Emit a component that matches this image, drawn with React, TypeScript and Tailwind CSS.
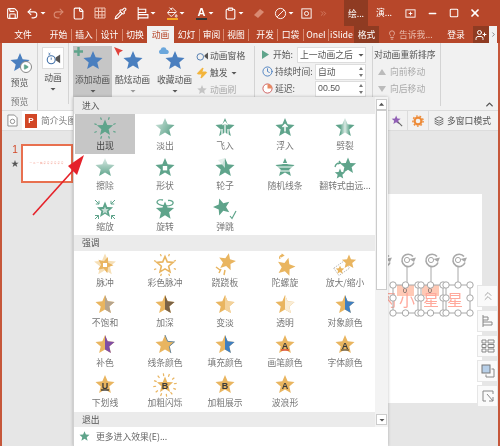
import React from "react";
import { Save, Undo2, Redo2, File, Pipette, PaintBucket, Clipboard, ChevronsRight, Minus, Square, X, Lightbulb, UserPlus, ChevronRight, ChevronUp, Zap, Clock, Play, ChevronsUp, Layers } from "lucide-react";

const G = "#5fa48b", Y = "#e9b560", B = "#4a7fbf";
const pts = (cx: number, cy: number, R: number, r = R * 0.45, rot = 0) =>
  Array.from({ length: 10 }, (_, i) => {
    const a = ((-90 + rot + i * 36) * Math.PI) / 180, q = i % 2 ? r : R;
    return [cx + q * Math.cos(a), cy + q * Math.sin(a)];
  });
const P = (a: number[][]) => a.map((p) => p.map((n) => n.toFixed(2)).join(",")).join(" ");
const S = (cx = 12, cy = 12, R = 10, rot = 0) => P(pts(cx, cy, R, R * 0.45, rot));
const H = (cx = 12, cy = 12, R = 10) => P(pts(cx, cy, R).slice(0, 6));

function Ticks({ c, r1 = 10, r2 = 12, n = 8 }: { c: string; r1?: number; r2?: number; n?: number }) {
  return (
    <>
      {Array.from({ length: n }, (_, i) => {
        const a = ((i * 360) / n + 22) * (Math.PI / 180);
        return <line key={i} x1={12 + r1 * Math.cos(a)} y1={12 + r1 * Math.sin(a)} x2={12 + r2 * Math.cos(a)} y2={12 + r2 * Math.sin(a)} stroke={c} strokeWidth="1.2" />;
      })}
    </>
  );
}
function Half({ c }: { c: string }) {
  return (
    <>
      <polygon points={S()} fill={Y} />
      <polygon points={H()} fill={c} />
    </>
  );
}
function Letter({ t, under }: { t: string; under?: string }) {
  return (
    <>
      <polygon points={S()} fill={Y} />
      <text x="12" y="15.5" textAnchor="middle" fontSize="9" fontWeight="700" fill="#3a3a3a" fontFamily="Liberation Sans, sans-serif">{t}</text>
      {under && <line x1="8" y1="17" x2="16" y2="17" stroke={under} strokeWidth="1.4" />}
    </>
  );
}
const icons: Record<string, React.ReactNode> = {
  appear: (<><polygon points={S(12, 12, 8.5)} fill={G} /><Ticks c={G} r1={9} r2={11.5} /></>),
  fade: (<><defs><linearGradient id="gf" x1="0" y1="0" x2="1" y2="0.6"><stop offset="0" stopColor="#d7e9e2" /><stop offset="1" stopColor={G} /></linearGradient></defs><polygon points={S()} fill="url(#gf)" /></>),
  fly: (<><polygon points={S()} fill={G} /><path d="M12 6v12M9.5 9L12 6l2.5 3M9 13v6M15 13v6" stroke="#fff" strokeWidth="1.2" fill="none" /></>),
  float: (<><polygon points={S()} fill={G} /><path d="M12 8.5v7M9.5 11L12 8.5l2.5 2.5" stroke="#fff" strokeWidth="1.5" fill="none" /></>),
  split: (<><defs><linearGradient id="gs" x1="0" y1="0" x2="1" y2="0"><stop offset="0.25" stopColor={G} /><stop offset="0.5" stopColor="#d8e9e3" /><stop offset="0.75" stopColor={G} /></linearGradient></defs><polygon points={S()} fill="url(#gs)" /></>),
  wipe: (<><defs><linearGradient id="gw" x1="0" y1="0" x2="0" y2="1"><stop offset="0" stopColor="#dcebe6" /><stop offset="1" stopColor={G} /></linearGradient></defs><polygon points={S()} fill="url(#gw)" /></>),
  shape: (<><polygon points={S()} fill={G} /><rect x="9.8" y="10" width="4.4" height="4.4" fill="#fff" /></>),
  wheel: (<><polygon points={S()} fill={G} /><path d="M12 2v10L5 4z" fill="#dcebe6" opacity="0.8" /></>),
  lines: (<><polygon points={S()} fill={G} /><path d="M1 7.5h22M1 11h22M1 15h22" stroke="#fff" strokeWidth="1.2" /></>),
  flip: (<><polygon points={S(15, 10, 8.5)} fill={G} /><polygon points={S(7, 18, 5.5)} fill={G} /><path d="M2 11a5 5 0 0 1 5-4M6 5l1.6 2L5 8" stroke={G} strokeWidth="1.3" fill="none" /></>),
  zoom: (<><polygon points={S(12, 13, 8.5)} fill={G} /><polygon points={S(12, 13.5, 4)} fill="#c8dfd7" /><path d="M2 3l4 4M6 3.8V7H2.8M22 3l-4 4M18 3.8V7h3.2M2 22l3.5-3.5M5.5 22v-3.5H2M22 22l-3.5-3.5M18.5 22v-3.5H22" stroke={G} strokeWidth="1" fill="none" /></>),
  spin: (<><polygon points={S(12, 14, 9.5)} fill={G} /><path d="M15 3.5C18 3 21 4.5 20 6.5c-1 2-5 2.5-8 2.3C8 8.5 3 7 4.2 4.5 5 3 8 2.5 10 3" stroke={G} strokeWidth="1.3" fill="none" /></>),
  bounce: (<><polygon points={S(9, 10, 9, -18)} fill={G} /><path d="M17 19l2 2.5L23 14" stroke={G} strokeWidth="1.2" fill="none" /></>),
  pulse: (<><polygon points={S(12, 12, 11.5)} fill="#f6dfb6" /><polygon points={S(12, 12, 8.5, 20)} fill={Y} /><rect x="10" y="10" width="4" height="4" fill="#fff" /></>),
  color: (<><polygon points={S(12, 12, 8.5)} fill="#fff" stroke={Y} strokeWidth="1.6" /><Ticks c={Y} r1={9.5} r2={11.8} /></>),
  teeter: (<><polygon points={S(14, 9, 9, 12)} fill={Y} /><path d="M6 20l2-4M11 22l1-5M3 14l4 3" stroke={Y} strokeWidth="1.5" /></>),
  whirl: (<><polygon points={S(13, 14, 9.5, 15)} fill={Y} /><path d="M7 6c-1-2 0-4 3-3.5M8.5 1L10.5 2.5 8 4" stroke={Y} strokeWidth="1.3" fill="none" /></>),
  grow: (<><rect x="2" y="11" width="13" height="9" fill="#fff" stroke="#999" strokeWidth="0.6" strokeDasharray="1.5 1" transform="rotate(-35 8 15)" /><polygon points={S(16, 9, 7.5)} fill={Y} /><polygon points={S(7, 17, 4.5)} fill={Y} /></>),
  desat: <Half c="#b5a48e" />,
  darken: <Half c="#7a6347" />,
  lighten: <Half c="#f3d29b" />,
  trans: <Half c="#f9ecd5" />,
  objc: <Half c="#3f7fc1" />,
  comp: <Half c="#7f4ea5" />,
  line: (<><polygon points={S()} fill={Y} /><polyline points={P(pts(12, 12, 10).slice(0, 5))} fill="none" stroke="#5b7f9a" strokeWidth="0.9" /></>),
  fill: <Half c="#3f7fc1" />,
  brush: <Letter t="A" under="#d9452b" />,
  font: <Letter t="A" under="#6b5a3c" />,
  under: <Letter t="U" under="#3a3a3a" />,
  flash: (<><polygon points={S(12, 12, 8.5)} fill={Y} /><Ticks c={Y} r1={9} r2={11.8} n={12} /><text x="12" y="15.5" textAnchor="middle" fontSize="9" fontWeight="700" fill="#3a3a3a" fontFamily="Liberation Sans, sans-serif">B</text></>),
  bold: <Letter t="B" />,
  wave: <Letter t="A" />,
};

function Cell({ label, icon, sel }: { label: string; icon: string; sel?: boolean }) {
  return (
    <div className={`h-[40.33px] w-[60px] flex flex-col items-center pt-[2px] ${sel ? "bg-[#c6c6c6]" : ""}`}>
      <svg viewBox="0 0 24 24" className="w-[24px] h-[24px] shrink-0">{icons[icon]}</svg>
      <span className={`text-[8.8px] leading-[12px] whitespace-nowrap ${sel ? "text-[#444]" : "text-[#777]"}`}>{label}</span>
    </div>
  );
}
function Head({ t }: { t: string }) {
  return <div className="bg-[#ebebeb] text-[#555] text-[8.8px] pl-[8px] h-[16px] leading-[16px]">{t}</div>;
}
const enter: [string, string][] = [["出现", "appear"], ["淡出", "fade"], ["飞入", "fly"], ["浮入", "float"], ["劈裂", "split"], ["擦除", "wipe"], ["形状", "shape"], ["轮子", "wheel"], ["随机线条", "lines"], ["翻转式由远...", "flip"], ["缩放", "zoom"], ["旋转", "spin"], ["弹跳", "bounce"]];
const emph: [string, string][] = [["脉冲", "pulse"], ["彩色脉冲", "color"], ["跷跷板", "teeter"], ["陀螺旋", "whirl"], ["放大/缩小", "grow"], ["不饱和", "desat"], ["加深", "darken"], ["变淡", "lighten"], ["透明", "trans"], ["对象颜色", "objc"], ["补色", "comp"], ["线条颜色", "line"], ["填充颜色", "fill"], ["画笔颜色", "brush"], ["字体颜色", "font"], ["下划线", "under"], ["加粗闪烁", "flash"], ["加粗展示", "bold"], ["波浪形", "wave"]];

function Chev({ c = "#fff" }: { c?: string }) {
  return <svg viewBox="0 0 8 8" className="w-[8px] h-[8px]"><path d="M1.5 3h5L4 5.5z" fill={c} /></svg>;
}
function Spin() {
  return <svg viewBox="0 0 8 14" className="w-[8px] h-[14px]"><path d="M2 5h4L4 2zM2 9h4l-2 3z" fill="#777" /></svg>;
}
function BlueStar() {
  return <svg viewBox="0 0 24 24" className="w-[24px] h-[24px]"><polygon points={S(12, 12, 10)} fill={B} /></svg>;
}
function Btn({ w, label, active, children, dim }: { w: string; label: string; active?: boolean; children: React.ReactNode; dim?: boolean }) {
  return (
    <div className={`${w} h-[51px] mt-[3px] flex flex-col items-center ${active ? "bg-[#c6c6c6]" : ""}`}>
      <div className="h-[27px] flex items-end relative">{children}</div>
      <span className="text-[8.8px] leading-[14px] text-[#555] whitespace-nowrap">{label}</span>
      <Chev c={dim ? "#999" : "#555"} />
    </div>
  );
}
function Tab({ w, t, active, dark }: { w: string; t: string; active?: boolean; dark?: boolean }) {
  return (
    <div className={`${w} h-[17px] text-center text-[8.8px] leading-[17px] shrink-0 overflow-hidden whitespace-nowrap ${active ? "bg-[#f1f1f1] text-[#b7472a]" : dark ? "bg-[#8f3b22] text-white" : "text-white"}`}>{t}</div>
  );
}
const Sep = () => <div className="w-px h-[12px] bg-[#d98a72] self-center shrink-0" />;
function Tool({ children }: { children: React.ReactNode }) {
  return <div className="w-[21px] h-[22px] bg-[#fafafa] border border-[#e6e6e6] flex items-center justify-center text-[#9a9a9a]">{children}</div>;
}
const rot = [-5, 19, 43, 70];
const handles: [number, number][] = [5, 17.5, 30, 33, 42.5, 55, 58, 70, 82].flatMap((x) => [32, 60].map((y) => [x, y] as [number, number])).concat([5, 30, 33, 55, 58, 82].map((x) => [x, 45] as [number, number]));

export default function App() {
  const wi = "w-[13px] h-[13px] text-white";
  return (
    <div className="relative w-[500px] h-[446px] overflow-hidden bg-[#e6e6e6] font-['Noto_Sans_CJK_SC','Liberation_Sans',sans-serif] blur-[0.3px]">
      {/* title bar */}
      <div className="h-[26px] flex items-center bg-[#b7472a] pl-[2px]">
        <div className="w-[21px] flex justify-center"><Save className={wi} /></div>
        <div className="w-[26px] flex items-center justify-center"><Undo2 className={wi} /><Chev /></div>
        <div className="w-[19px] flex justify-center"><Redo2 className="w-[13px] h-[13px] text-[#d98a72]" /></div>
        <div className="w-[21px] flex justify-center"><File className={wi} /></div>
        <div className="w-[21px] flex justify-center">
          <svg viewBox="0 0 12 12" className="w-[12px] h-[12px]"><path d="M1 1h10v10H1zM1 4.5h10M1 8h10M4.5 1v10M8 1v10" stroke="#f0c4b4" fill="none" /></svg>
        </div>
        <div className="w-[21px] flex justify-center"><Pipette className={wi} /></div>
        <div className="w-[30px] flex items-center justify-center">
          <svg viewBox="0 0 12 12" className="w-[13px] h-[13px]"><path d="M2 0v12M2 2h7v3H2M2 7h9v3H2" stroke="#fff" fill="none" /></svg><Chev />
        </div>
        <div className="w-[30px] flex items-center justify-center">
          <div className="flex flex-col items-center"><PaintBucket className="w-[11px] h-[11px] text-white" /><div className="w-[11px] h-[2px] bg-[#f5a623]" /></div><Chev />
        </div>
        <div className="w-[29px] flex items-center justify-center">
          <div className="flex flex-col items-center leading-none"><span className="text-[11px] leading-[11px] font-bold text-white font-['Liberation_Sans']">A</span><div className="w-[11px] h-[2px] bg-[#333]" /></div><Chev />
        </div>
        <div className="w-[29px] flex items-center justify-center"><Clipboard className={wi} /><Chev /></div>
        <div className="w-[20px] flex justify-center">
          <svg viewBox="0 0 12 12" className="w-[12px] h-[12px]"><path d="M1 8l6-6 4 3-6 6z" fill="#d98a72" /></svg>
        </div>
        <div className="w-[30px] flex items-center justify-center">
          <svg viewBox="0 0 14 14" className="w-[13px] h-[13px]"><circle cx="7" cy="7" r="5.5" stroke="#fff" fill="none" /><path d="M3.5 10.5l7-7" stroke="#fff" /></svg><Chev />
        </div>
        <div className="w-[14px] flex justify-center">
          <svg viewBox="0 0 14 14" className="w-[13px] h-[13px]"><rect x="2" y="2" width="10" height="10" stroke="#fff" fill="none" /><circle cx="7" cy="7" r="2.2" stroke="#fff" fill="none" /></svg>
        </div>
        <div className="w-[20px] flex justify-center"><ChevronsRight className="w-[9px] h-[9px] text-[#d98a72]" /></div>
        <div className="w-[11px]" />
        <div className="w-[24px] h-[26px] bg-[#8f3b22] text-center text-white text-[8.8px] leading-[28px]">绘...</div>
        <div className="w-[32px] text-center text-white text-[8.8px]">演...</div>
        <div className="w-[21px] flex justify-center">
          <svg viewBox="0 0 12 12" className="w-[11px] h-[11px]"><rect x="1" y="2" width="10" height="8" stroke="#fff" fill="none" /><path d="M4 6h4M6 4v4" stroke="#fff" /></svg>
        </div>
        <div className="w-[22px] flex justify-center"><Minus className="w-[11px] h-[11px] text-white" strokeWidth={3} /></div>
        <div className="w-[22px] flex justify-center"><Square className="w-[10px] h-[10px] text-white" strokeWidth={2.5} /></div>
        <div className="w-[20px] flex justify-center"><X className="w-[12px] h-[12px] text-white" strokeWidth={3.5} /></div>
      </div>
      {/* tabs */}
      <div className="h-[17px] flex bg-[#b7472a]">
        <Tab w="w-[46px]" t="文件" />
        <Tab w="w-[25px]" t="开始" /><Sep />
        <Tab w="w-[24px]" t="插入" /><Sep />
        <Tab w="w-[25px]" t="设计" /><Sep />
        <Tab w="w-[24px]" t="切换" />
        <Tab w="w-[27px]" t="动画" active />
        <Tab w="w-[25px]" t="幻灯" /><Sep />
        <Tab w="w-[23px]" t="审阅" /><Sep />
        <Tab w="w-[24px]" t="视图" /><Sep />
        <div className="w-[4px]" />
        <Tab w="w-[24px]" t="开发" /><Sep />
        <Tab w="w-[25px]" t="口袋" /><Sep />
        <Tab w="w-[24px]" t="OneI" /><Sep />
        <Tab w="w-[25px]" t="iSlide" />
        <Tab w="w-[25px]" t="格式" dark />
        <div className="w-[8px]" />
        <div className="w-[52px] flex items-center gap-[2px] text-[8.8px] text-[#e8b8a8] whitespace-nowrap"><Lightbulb className="w-[10px] h-[10px]" />告诉我...</div>
        <Tab w="w-[34px]" t="登录" />
        <div className="w-[16px] h-[17px] bg-[#8f3b22] flex items-center justify-center"><UserPlus className="w-[12px] h-[12px] text-white" /></div>
        <div className="w-[8px] h-[17px] bg-[#f1f1f1] flex items-center justify-center"><ChevronRight className="w-[7px] h-[7px] text-[#444]" /></div>
      </div>
      {/* body with coloured window edge */}
      <div className="h-[403px] border-x-2 border-[#c6573a] flex flex-col">
        {/* ribbon */}
        <div className="h-[67px] flex bg-[#f1f1f1] relative shrink-0">
          <div className="w-[36px] border-r border-[#d4d4d4] flex flex-col items-center">
            <div className="relative mt-[8px] h-[24px]">
              <BlueStar />
              <div className="absolute left-[12px] top-[10px] w-[12px] h-[12px] rounded-full bg-white border border-[#888] flex items-center justify-center"><Play className="w-[6px] h-[6px] text-[#5fa48b]" fill="#5fa48b" /></div>
            </div>
            <span className="text-[8.8px] leading-[16px] text-[#555]">预览</span>
            <Chev c="#555" />
            <span className="text-[8.8px] leading-[18px] text-[#777] mt-[2px]">预览</span>
          </div>
          <div className="w-[31px] border-r border-[#d4d4d4] mb-[6px] flex flex-col items-center pt-[4px]">
            <div className="w-[22px] h-[22px] bg-white border border-[#ddd] flex items-center justify-center">
              <svg viewBox="0 0 18 18" className="w-[16px] h-[16px]"><circle cx="7" cy="11" r="4.5" fill="none" stroke="#3f6fa8" strokeWidth="1.2" /><path d="M7 11V8.5M4 3.5l2 2M6 3.5l-2 2" stroke="#3f6fa8" /><path d="M17 5v10l-5-3.5v-3z" fill="#555" /></svg>
            </div>
            <span className="text-[8.8px] leading-[14px] text-[#555] mt-[2px]">动画</span>
            <Chev c="#555" />
          </div>
          <div className="w-[4px]" />
          <Btn w="w-[39px]" label="添加动画" active>
            <BlueStar />
            <svg viewBox="0 0 10 10" className="absolute left-[-7px] top-[1px] w-[9px] h-[9px]"><path d="M5 0v10M0 5h10" stroke={G} strokeWidth="2.6" /></svg>
          </Btn>
          <div className="w-[1px]" />
          <Btn w="w-[39px]" label="酷炫动画" dim>
            <BlueStar />
            <svg viewBox="0 0 10 10" className="absolute left-[-7px] top-[1px] w-[9px] h-[9px]"><path d="M0 0l10 4-4 2-1 4z" fill="#e0413a" /></svg>
          </Btn>
          <div className="w-[3px]" />
          <Btn w="w-[39px]" label="收藏动画">
            <BlueStar />
            <svg viewBox="0 0 14 9" className="absolute left-[-5px] top-[1px] w-[12px] h-[8px]"><path d="M3 8a2.6 2.6 0 0 1 0-5 3.6 3.6 0 0 1 7 0 2.6 2.6 0 0 1 1 5z" fill="#6ba7dc" /></svg>
          </Btn>
          <div className="w-[58px] ml-[2px] mt-[4px] flex flex-col text-[8.8px] text-[#555]">
            <div className="h-[17px] flex items-center gap-[2px] whitespace-nowrap">
              <svg viewBox="0 0 14 12" className="w-[12px] h-[12px] shrink-0"><circle cx="5" cy="7" r="3.8" fill="none" stroke="#3f6fa8" /><path d="M14 2v8l-4-3V5z" fill="#555" /></svg>动画窗格
            </div>
            <div className="h-[17px] flex items-center gap-[2px] whitespace-nowrap"><Zap className="w-[12px] h-[12px] text-[#f3b43a]" fill="#f3b43a" />触发<Chev c="#555" /></div>
            <div className="h-[17px] flex items-center gap-[2px] whitespace-nowrap text-[#aaa]">
              <svg viewBox="0 0 24 24" className="w-[12px] h-[12px] shrink-0"><polygon points={S()} fill="#c4c4c4" /></svg>动画刷
            </div>
          </div>
          <div className="w-px bg-[#d4d4d4] mb-[4px] mt-[3px]" />
          <div className="w-[117px] mt-[3px] flex flex-col text-[8.8px] text-[#555] pl-[7px]">
            <div className="h-[17px] flex items-center whitespace-nowrap">
              <svg viewBox="0 0 8 10" className="w-[7px] h-[9px] mr-[4px] shrink-0"><path d="M0 0l8 5-8 5z" fill={G} /></svg>
              <span className="w-[24px]">开始:</span>
              <div className="w-[69px] h-[16px] bg-white border border-[#ddd] flex items-center justify-between pl-[2px]">上一动画之后<Chev c="#555" /></div>
            </div>
            <div className="h-[17px] flex items-center whitespace-nowrap">
              <Clock className="w-[11px] h-[11px] text-[#4a7fbf] mr-[2px] shrink-0" />
              <span className="w-[40px]">持续时间:</span>
              <div className="w-[51px] h-[16px] bg-white border border-[#ddd] flex items-center justify-between pl-[2px]">自动<Spin /></div>
            </div>
            <div className="h-[17px] flex items-center whitespace-nowrap">
              <svg viewBox="0 0 12 12" className="w-[11px] h-[11px] mr-[2px] shrink-0"><circle cx="6" cy="6" r="5" fill="#fff" stroke="#c55" /><path d="M6 6V1a5 5 0 0 1 5 5z" fill="#e8895f" /></svg>
              <span className="w-[40px]">延迟:</span>
              <div className="w-[51px] h-[16px] bg-white border border-[#ddd] flex items-center justify-between pl-[2px] font-['Liberation_Sans']">00.50<Spin /></div>
            </div>
          </div>
          <div className="w-px bg-[#d4d4d4] mb-[4px] mt-[3px]" />
          <div className="w-[67px] mt-[3px] flex flex-col text-[8.8px] pl-[1px] whitespace-nowrap">
            <div className="h-[17px] leading-[17px] text-[#555]">对动画重新排序</div>
            <div className="h-[17px] flex items-center gap-[4px] pl-[4px] text-[#aaa]"><svg viewBox="0 0 8 6" className="w-[8px] h-[6px]"><path d="M0 6l4-6 4 6z" fill="#bbb" /></svg>向前移动</div>
            <div className="h-[17px] flex items-center gap-[4px] pl-[4px] text-[#aaa]"><svg viewBox="0 0 8 6" className="w-[8px] h-[6px]"><path d="M0 0l4 6 4-6z" fill="#bbb" /></svg>向后移动</div>
          </div>
          <div className="w-px bg-[#d4d4d4] mb-[4px]" />
          <div className="flex-1 flex items-end justify-end pr-[3px]"><ChevronUp className="w-[11px] h-[11px] text-[#555]" strokeWidth={3} /></div>
        </div>
        {/* document bar */}
        <div className="h-[21px] flex bg-[#f1f1f1] border-y border-[#dcdcdc] shrink-0 items-stretch">
          <div className="w-[20px] flex items-center justify-center">
            <svg viewBox="0 0 12 14" className="w-[11px] h-[13px]"><path d="M1 1h7l3 3v9H1z" fill="#fff" stroke="#888" /><circle cx="6" cy="8" r="2.4" fill="none" stroke="#888" /></svg>
          </div>
          <div className="w-[53px] bg-white flex items-center gap-[4px] pl-[3px] overflow-hidden whitespace-nowrap">
            <div className="w-[12px] h-[14px] bg-[#d24726] text-white text-[8px] font-bold leading-[14px] text-center font-['Liberation_Sans'] shrink-0">P</div>
            <span className="text-[8.8px] text-[#777]">简介头图</span>
          </div>
          <div className="flex-1" />
          <div className="w-[21px] flex items-center justify-center border-r border-[#dcdcdc]">
            <svg viewBox="0 0 14 14" className="w-[12px] h-[12px]"><polygon points={P(pts(6, 6, 5.5))} fill="#9160b5" /><path d="M8 8l5 5" stroke="#666" strokeWidth="1.3" /></svg>
          </div>
          <div className="w-[21px] flex items-center justify-center border-r border-[#dcdcdc]">
            <svg viewBox="0 0 14 14" className="w-[12px] h-[12px]"><circle cx="7" cy="7" r="4" fill="none" stroke="#ed8a37" strokeWidth="2.6" /><circle cx="7" cy="7" r="6" fill="none" stroke="#ed8a37" strokeWidth="1.6" strokeDasharray="2 2.2" /></svg>
          </div>
          <div className="w-[69px] flex items-center gap-[3px] pl-[5px] text-[8.8px] text-[#555] whitespace-nowrap">
            <Layers className="w-[10px] h-[10px] shrink-0" />多窗口模式
          </div>
        </div>
        {/* main */}
        <div className="flex-1 flex relative min-h-0">
          <div className="w-[71px] shrink-0 flex pt-[13px] pl-[8px]">
            <div className="w-[10px] flex flex-col items-center">
              <span className="text-[10px] leading-[12px] text-[#d24726] font-['Liberation_Sans']">1</span>
              <span className="text-[8px] text-[#555] leading-[14px]">★</span>
            </div>
            <div className="w-[53px] h-[39px] bg-white border-2 border-[#e8704f] flex items-center justify-center ml-[1px]">
              <span className="text-[2.5px] text-[#f08a78] tracking-[1px] whitespace-nowrap">一二一简星星星星星星</span>
            </div>
          </div>
          <div className="flex-1 pt-[63px] pl-[116px]">
            <div className="w-[293px] h-[209px] bg-white" />
          </div>
          <svg viewBox="0 0 95 70" className="absolute left-[386px] top-[122px] w-[95px] h-[70px] overflow-visible">
            <rect x="9" y="32" width="17" height="11" fill="#ffc9b5" />
            <rect x="34" y="32" width="17" height="11" fill="#ffc9b5" />
            <text x="0" y="53" textAnchor="middle" fontSize="16" fill="#ffa99c" fontFamily="Noto Sans CJK SC">闪</text>
            <text x="19" y="53" textAnchor="middle" fontSize="16" fill="#ffa99c" fontFamily="Noto Sans CJK SC">小</text>
            <text x="43" y="53" textAnchor="middle" fontSize="16" fill="#ffa99c" fontFamily="Noto Sans CJK SC">星</text>
            <text x="67" y="53" textAnchor="middle" fontSize="16" fill="#ffa99c" fontFamily="Noto Sans CJK SC">星</text>
            <text x="17" y="40" textAnchor="middle" fontSize="7" fill="#555" fontFamily="Liberation Sans">0</text>
            <text x="42" y="40" textAnchor="middle" fontSize="7" fill="#555" fontFamily="Liberation Sans">0</text>
            <g fill="none" stroke="#a8a8a8">
              {rot.map((x) => (
                <g key={x}>
                  <path d={`M${x + 6} 3.5a6.2 6.2 0 1 0 1 6`} strokeWidth="1.6" />
                  <path d={`M${x + 2.5} 6l4.5 3 2-4.5z`} fill="#a8a8a8" stroke="none" />
                  <circle cx={x} cy="7" r="2.6" strokeWidth="1" />
                  <path d={`M${x} 13V32`} strokeWidth="1" />
                </g>
              ))}
              <path d="M5 32H30V60H5zM33 32H55V60H33zM58 32H82V60H58z" strokeWidth="1" />
            </g>
            <g fill="#fff" stroke="#a8a8a8" strokeWidth="1">
              {handles.map(([x, y]) => <circle key={`${x}-${y}`} cx={x} cy={y} r="3.2" />)}
            </g>
          </svg>
          <div className="absolute right-0 top-[154px] flex flex-col gap-[3px]">
            <Tool><ChevronsUp className="w-[14px] h-[14px]" strokeWidth={1.5} /></Tool>
            <Tool><svg viewBox="0 0 14 14" className="w-[14px] h-[14px]"><path d="M2 1v12M2 3h5v3H2M2 8h9v3H2" stroke="#888" fill="none" /></svg></Tool>
            <Tool><svg viewBox="0 0 14 14" className="w-[14px] h-[14px]"><path d="M1 1h4v3H1zM1 5.5h4v3H1zM1 10h4v3H1zM7 1h6v3H7zM7 5.5h6v3H7zM7 10h6v3H7z" stroke="#888" fill="none" /></svg></Tool>
            <Tool><svg viewBox="0 0 14 14" className="w-[14px] h-[14px]"><rect x="1" y="1" width="8" height="8" fill="#b7cfe8" stroke="#777" /><path d="M10.5 5H13v8H5v-2.5" stroke="#888" fill="none" /></svg></Tool>
            <Tool><svg viewBox="0 0 14 14" className="w-[14px] h-[14px]"><path d="M12 5V2H2v10h3M6 5l6 7M12 8v4H8" stroke="#888" fill="none" /></svg></Tool>
          </div>
          {/* red callout arrow */}
          <svg viewBox="0 0 60 70" className="absolute left-[28px] top-[19px] w-[60px] h-[70px] z-20 overflow-visible">
            <path d="M3 65L47 16" stroke="#e5222a" strokeWidth="1.6" />
            <path d="M54 5L38 16 L47 25z" fill="#e5222a" />
          </svg>
        </div>
      </div>
      {/* dropdown gallery */}
      <div className="absolute left-[73px] top-[97px] w-[315px] h-[349px] bg-white border-l border-[#d0d0d0] shadow-[0_0_3px_rgba(0,0,0,0.25)] flex flex-col z-10">
        <div className="h-[330px] flex">
          <div className="w-[301px] flex flex-col">
            <div className="bg-[#ebebeb] text-[#555] text-[8.8px] pl-[8px] h-[17px] leading-[18px]">进入</div>
            <div className="h-[121px] grid grid-cols-5 content-start pl-[1px] w-[301px]">
              {enter.map(([l, i], n) => <Cell key={l} label={l} icon={i} sel={n === 0} />)}
            </div>
            <div className="h-[1px]" />
            <Head t="强调" />
            <div className="h-[160px] grid grid-cols-5 content-start pl-[1px]">
              {emph.map(([l, i]) => (
                <div key={l} className="h-[40px] w-[60px] flex flex-col items-center pt-[2px]">
                  <svg viewBox="0 0 24 24" className="w-[24px] h-[24px] shrink-0">{icons[i]}</svg>
                  <span className="text-[8.8px] leading-[12px] text-[#777] whitespace-nowrap">{l}</span>
                </div>
              ))}
            </div>
            <div className="h-[1px]" />
            <div className="bg-[#ebebeb] text-[#555] text-[8.8px] pl-[8px] h-[15px] leading-[15px] flex-1">退出</div>
          </div>
          <div className="w-[13px] bg-[#f3f3f3] flex flex-col items-center pt-[2px] pb-[2px]">
            <div className="w-[11px] h-[11px] bg-white border border-[#ccc] flex items-center justify-center"><svg viewBox="0 0 8 8" className="w-[7px] h-[7px]"><path d="M1 5.5h6L4 2z" fill="#555" /></svg></div>
            <div className="w-[11px] h-[180px] bg-white border border-[#ccc]" />
            <div className="flex-1" />
            <div className="w-[11px] h-[11px] bg-white border border-[#ccc] flex items-center justify-center"><Chev c="#555" /></div>
          </div>
        </div>
        <div className="h-[19px] flex items-center pl-[5px] gap-[6px]">
          <svg viewBox="0 0 24 24" className="w-[11px] h-[11px]"><polygon points={S(12, 12, 11.5)} fill={G} /></svg>
          <span className="text-[8.8px] text-[#666]">更多进入效果(E)...</span>
        </div>
      </div>
    </div>
  );
}
